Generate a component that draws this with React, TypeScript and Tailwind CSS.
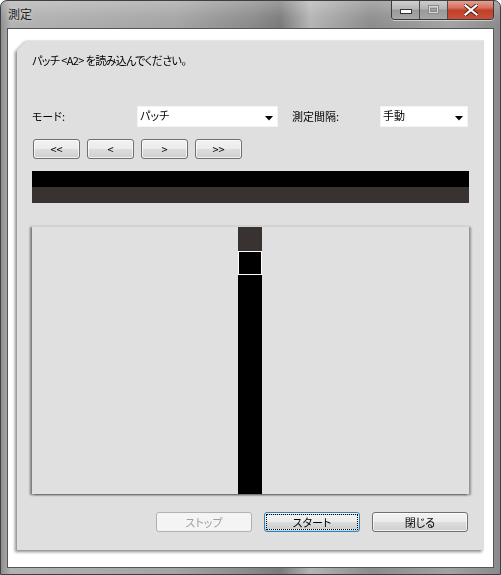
import React from "react";

const FONT = "font-['Noto_Sans_CJK_JP','Noto_Sans',sans-serif] [font-feature-settings:'palt']";

function WinButton({ label, className = "" }: { label: string; className?: string }) {
  return (
    <div
      className={`flex items-center justify-center rounded-[3px] border border-[#707070] bg-[linear-gradient(180deg,#f2f2f2_0%,#ebebeb_50%,#dddddd_51%,#cfcfcf_100%)] shadow-[inset_0_0_0_1px_rgba(255,255,255,0.7)] text-[11px] leading-none text-black ${className}`}
    >
      {label}
    </div>
  );
}

function Select({ value, className = "" }: { value: string; className?: string }) {
  return (
    <div className={`relative h-[21px] bg-white border border-[#f4f4f4] ${className}`}>
      <div className="pl-[2px] pt-[2px] text-[11px] leading-[12px] text-black">{value}</div>
      <svg className="absolute right-[4px] bottom-[5px]" width="8" height="5" viewBox="0 0 8 5">
        <polygon points="0,0 8,0 4,4.5" fill="#000" />
      </svg>
    </div>
  );
}

export default function App() {
  return (
    <div className={`w-[501px] h-[575px] ${FONT}`}>
      <div className="w-[501px] h-[575px] rounded-t-[7px] border border-[#3f3f3f] bg-[linear-gradient(90deg,#8f8f8f_0%,#b2b2b2_2%,#a4a4a4_35%,#8a8a8a_50%,#7a7a7a_56%,#b4b4b4_62%,#8c8c8c_74%,#a2a2a2_90%,#8a8a8a_100%)] flex flex-col overflow-hidden">
        {/* Title bar */}
        <div className="h-[27px] flex items-start bg-[linear-gradient(180deg,rgba(255,255,255,0.25)_0%,rgba(255,255,255,0.05)_60%,rgba(0,0,0,0)_100%)]">
          <div className="pl-[7px] pt-[6px] text-[12px] leading-[14px] text-[#1a1a1a] [text-shadow:0_0_4px_rgba(255,255,255,0.6)]">
            測定
          </div>
          <div className="ml-auto mr-[6px] -mt-px flex h-[20px] rounded-b-[4px] border border-t-0 border-[#3a3a3a] overflow-hidden shadow-[0_1px_0_rgba(255,255,255,0.5)]">
            <div className="w-[28px] h-full flex items-center justify-center border-r border-[#4a4a4a] bg-[linear-gradient(180deg,#d4d4d4_0%,#b8b8b8_45%,#9a9a9a_55%,#a8a8a8_100%)]">
              <svg width="12" height="5" viewBox="0 0 12 5" className="mt-[4px]">
                <rect x="0.5" y="0.5" width="11" height="4" fill="#fff" stroke="#333" />
              </svg>
            </div>
            <div className="w-[28px] h-full flex items-center justify-center border-r border-[#4a4a4a] bg-[linear-gradient(180deg,#d0d0d0_0%,#b4b4b4_45%,#999999_55%,#a6a6a6_100%)]">
              <svg width="11" height="9" viewBox="0 0 11 9">
                <rect x="0.5" y="0.5" width="10" height="8" fill="none" stroke="#8a8a8a" />
                <rect x="1.5" y="1.5" width="8" height="6" fill="none" stroke="#d8d8d8" />
                <rect x="2.5" y="3.5" width="6" height="3" fill="none" stroke="#8a8a8a" />
              </svg>
            </div>
            <div className="w-[45px] h-full flex items-center justify-center bg-[linear-gradient(180deg,#e8a898_0%,#d87060_40%,#c2402a_55%,#c8503a_100%)]">
              <svg width="14" height="12" viewBox="0 0 14 12">
                <path d="M1.5 1.5 L12.5 10.5 M12.5 1.5 L1.5 10.5" stroke="#4a1a10" strokeWidth="4" strokeLinecap="square" />
                <path d="M1.5 1.5 L12.5 10.5 M12.5 1.5 L1.5 10.5" stroke="#ffffff" strokeWidth="2.2" strokeLinecap="square" />
              </svg>
            </div>
          </div>
        </div>

        {/* Client area */}
        <div className="ml-[6px] w-[487px] h-[540px] border border-[#555555] bg-white pl-[9px] pt-[11px]">
          <div className="w-[467px] h-[510px] [filter:drop-shadow(-2px_2px_1.5px_rgba(0,0,0,0.45))]">
            <div className="w-full h-full bg-[#dfdfdf] [clip-path:polygon(10px_0,100%_0,100%_100%,0_100%,0_10px)] px-[15px] flex flex-col border-t border-[#e6e6e6]">
              <div className="mt-[11px] h-[16px] text-[11px] leading-[16px] tracking-[-0.6px] text-black">
                パッチ &lt;A2&gt; を読み込んでください。
              </div>

              <div className="mt-[38px] flex items-start h-[21px]">
                <div className="w-[105px] pt-[3px] text-[11px] leading-[14px] text-black">モード:</div>
                <Select value="パッチ" className="w-[141px]" />
                <div className="w-[14px]" />
                <div className="w-[88px] pt-[3px] text-[11px] leading-[14px] text-black">測定間隔:</div>
                <Select value="手動" className="w-[88px]" />
              </div>

              <div className="mt-[12px] ml-px flex gap-[7px]">
                <WinButton label="<<" className="w-[47px] h-[20px]" />
                <WinButton label="<" className="w-[47px] h-[20px]" />
                <WinButton label=">" className="w-[47px] h-[20px]" />
                <WinButton label=">>" className="w-[47px] h-[20px]" />
              </div>

              <div className="mt-[12px] flex flex-col">
                <div className="h-[16px] bg-black" />
                <div className="h-[16px] bg-[#383330]" />
              </div>

              <div className="mt-[23px] h-[268px] bg-[#e0e0e0] shadow-[-2px_1px_2px_rgba(0,0,0,0.45),2px_1px_2px_rgba(0,0,0,0.35)] border-t border-[#d2d2d2] flex pl-[206px]">
                <div className="w-[24px] h-full flex flex-col">
                  <div className="h-[24px] bg-[#383330]" />
                  <div className="h-[24px] bg-black border border-white" />
                  <div className="flex-1 bg-black" />
                </div>
              </div>

              <div className="mt-[18px] flex justify-end gap-[12px] pr-px">
                <div className="w-[96px] h-[20px] flex items-center justify-center rounded-[3px] border border-[#adb2b5] bg-[#f4f4f4] text-[11px] leading-none text-[#a0a0a0]">
                  ストップ
                </div>
                <div className="w-[96px] h-[20px] rounded-[3px] border border-[#3c7fb1] bg-[linear-gradient(180deg,#eaf6fd_0%,#d9f0fc_50%,#bee6fd_51%,#a7d9f5_100%)] p-px">
                  <div className="w-full h-full flex items-center justify-center border border-dotted border-black bg-[linear-gradient(180deg,#f2f2f2_0%,#ebebeb_50%,#dddddd_51%,#cfcfcf_100%)] text-[11px] leading-none text-black">
                    スタート
                  </div>
                </div>
                <WinButton label="閉じる" className="w-[96px] h-[20px]" />
              </div>
            </div>
          </div>
        </div>
      </div>
    </div>
  );
}
